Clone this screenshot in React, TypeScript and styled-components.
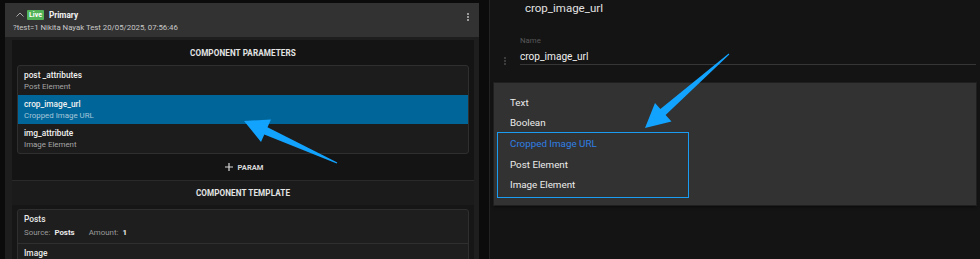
import React from "react";
import styled, { createGlobalStyle } from "styled-components";

const GlobalStyle = createGlobalStyle`
    html, body {
        margin: 0;
        padding: 0;
        background: #0b0b0b;
    }
    * {
        box-sizing: border-box;
    }
    body {
        font-family: Roboto, "Noto Sans", "Liberation Sans", sans-serif;
    }
`;

const Page = styled.div`
    position: relative;
    display: flex;
    width: 980px;
    height: 259px;
    overflow: hidden;
`;

// Left screenshot
const LeftShot = styled.div`
    width: 490px;
    height: 259px;
    padding: 3px 10px 0 5px;
    background: #0b0b0b;
    border-right: 1px solid #232323;
    display: flex;
    flex-direction: column;
    overflow: hidden;
`;

const Header = styled.div`
    flex-shrink: 0;
    height: 34px;
    background: #323232;
    display: flex;
    justify-content: space-between;
    padding: 5px 10px 0 8px;
`;

const HeaderMain = styled.div`
    display: flex;
    flex-direction: column;
`;

const HeaderRow = styled.div`
    display: flex;
    align-items: center;
    height: 13px;
`;

const Badge = styled.span`
    display: inline-flex;
    align-items: center;
    justify-content: center;
    height: 10px;
    padding: 0 2px;
    margin-right: 5px;
    background: #52b456;
    color: #fff;
    font-size: 7px;
    font-weight: 700;
    border-radius: 1px;
`;

const HeaderTitle = styled.span`
    color: #f2f2f2;
    font-size: 8.2px;
    font-weight: 700;
`;

const HeaderSub = styled.div`
    margin-top: 1px;
    color: #c8c8c8;
    font-size: 7.8px;
    line-height: 12px;
    white-space: nowrap;
`;

const Kebab = styled.div<{ $color: string; $size: number }>`
    display: flex;
    flex-direction: column;
    gap: 1px;
    padding-top: 5px;
    span {
        width: ${({ $size }) => $size}px;
        height: ${({ $size }) => $size}px;
        border-radius: 50%;
        background: ${({ $color }) => $color};
    }
`;

const Body = styled.div`
    flex: 1;
    background: #1e1e1e;
    padding: 3px 5px 0 7px;
`;

const Section = styled.div`
    background: #141414;
    display: flex;
    flex-direction: column;
`;

const SectionTitle = styled.div<{ $band?: boolean }>`
    height: ${({ $band }) => ($band ? 24 : 25)}px;
    display: flex;
    align-items: center;
    justify-content: center;
    background: ${({ $band }) => ($band ? "#1b1b1b" : "transparent")};
    color: #e4e4e4;
    font-size: 8.15px;
    font-weight: 700;
    letter-spacing: 0.1px;
`;

const ParamList = styled.div`
    margin: 0 5px;
    border: 1px solid #2f2f2f;
    border-radius: 3px;
    background: #1c1c1c;
    overflow: hidden;
`;

const ParamItem = styled.div<{ $selected?: boolean }>`
    height: 29px;
    padding: 3px 6px 0;
    background: ${({ $selected }) => ($selected ? "#006699" : "transparent")};
    display: flex;
    flex-direction: column;
`;

const ParamName = styled.span`
    color: #f0f0f0;
    font-size: 8.3px;
    font-weight: 500;
    line-height: 12px;
`;

const ParamType = styled.span<{ $selected?: boolean }>`
    color: ${({ $selected }) => ($selected ? "#a8c6da" : "#a6a6a6")};
    font-size: 7.9px;
    line-height: 11px;
`;

const AddParam = styled.div`
    height: 27px;
    display: flex;
    align-items: center;
    justify-content: center;
    gap: 5px;
    color: #d8d8d8;
    font-size: 7.6px;
    font-weight: 700;
    border-bottom: 1px solid #2a2a2a;
    padding-left: 2px;
`;

const TemplateBody = styled.div`
    flex: 1;
    background: #161616;
    padding: 4px 5px 0;
`;

const CardList = styled.div`
    border: 1px solid #2f2f2f;
    border-radius: 3px 3px 0 0;
    background: #1e1e1e;
`;

const Card = styled.div`
    padding: 3px 6px 4px;
    border-bottom: 1px solid #2f2f2f;
`;

const CardTitle = styled.div`
    color: #ececec;
    font-size: 8.4px;
    font-weight: 500;
    line-height: 12px;
`;

const CardMeta = styled.div`
    margin-top: 2px;
    display: flex;
    gap: 14px;
    font-size: 7.9px;
    line-height: 12px;
`;

const MetaPair = styled.span`
    color: #9a9a9a;
    b {
        color: #eaeaea;
        font-weight: 700;
        margin-left: 4px;
    }
`;

// Right screenshot
const RightShot = styled.div`
    flex: 1;
    height: 259px;
    background: #141414;
    padding: 0 4px;
    display: flex;
    flex-direction: column;
`;

const EditorTitle = styled.div`
    margin-top: 1px;
    padding-left: 31px;
    color: #e2e2e2;
    font-size: 11.5px;
    line-height: 14px;
`;

const Field = styled.div`
    margin-top: 21px;
    display: grid;
    grid-template-columns: 26px 1fr;
`;

const FieldLabel = styled.div`
    grid-column: 2;
    color: #585858;
    font-size: 7.8px;
    line-height: 10px;
`;

const Handle = styled.div`
    grid-column: 1;
    padding: 6px 0 0 10px;
`;

const FieldValue = styled.div`
    grid-column: 2;
    margin-top: 4px;
    color: #efefef;
    font-size: 10.1px;
    line-height: 14px;
    border-bottom: 1px solid #363636;
    height: 15px;
`;

const Menu = styled.div`
    margin-top: 18px;
    height: 122px;
    background: #323232;
    padding: 9px 0 0;
    box-shadow: 0 0 0 1px #1f1f1f, 0 2px 3px rgba(0, 0, 0, 0.5);
`;

const MenuItem = styled.div<{ $active?: boolean }>`
    height: 20.6px;
    display: flex;
    align-items: center;
    padding-left: 16px;
    color: ${({ $active }) => ($active ? "#2f7fe4" : "#ececec")};
    font-size: 9.8px;
`;

const Highlight = styled.div`
    width: 192px;
    margin: -1px 0 0 3px;
    padding-bottom: 2px;
    border: 1px solid #1a9cf2;
    ${MenuItem} {
        padding-left: 12px;
    }
`;

const Overlay = styled.svg`
    position: absolute;
    left: 0;
    top: 0;
    pointer-events: none;
`;

const ChevronUp = () => (
    <svg width="8" height="5" viewBox="0 0 8 5" style={{ margin: "0 3px 0 3px" }}>
        <path d="M0.5 4.5 L4 1 L7.5 4.5" fill="none" stroke="#a8a8a8" strokeWidth="1" />
    </svg>
);

const dots = (color: string, size: number) => (
    <Kebab $color={color} $size={size}>
        <span />
        <span />
        <span />
    </Kebab>
);

const params = [
    { name: "post _attributes", type: "Post Element" },
    { name: "crop_image_url", type: "Cropped Image URL", selected: true },
    { name: "img_attribute", type: "Image Element" },
];

const App: React.FC = () => {
    return (
        <>
            <GlobalStyle />
            <Page>
                <LeftShot>
                    <Header>
                        <HeaderMain>
                            <HeaderRow>
                                <ChevronUp />
                                <Badge>Live</Badge>
                                <HeaderTitle>Primary</HeaderTitle>
                            </HeaderRow>
                            <HeaderSub>?test=1 Nikita Nayak Test 20/05/2025, 07:56:46</HeaderSub>
                        </HeaderMain>
                        {dots("#bdbdbd", 2)}
                    </Header>
                    <Body>
                        <Section>
                            <SectionTitle>COMPONENT PARAMETERS</SectionTitle>
                            <ParamList>
                                {params.map((p) => (
                                    <ParamItem key={p.name} $selected={p.selected}>
                                        <ParamName>{p.name}</ParamName>
                                        <ParamType $selected={p.selected}>{p.type}</ParamType>
                                    </ParamItem>
                                ))}
                            </ParamList>
                            <AddParam>
                                <svg width="8" height="8" viewBox="0 0 8 8">
                                    <path d="M4 0 V8 M0 4 H8" stroke="#d8d8d8" strokeWidth="1.2" />
                                </svg>
                                PARAM
                            </AddParam>
                            <SectionTitle $band>COMPONENT TEMPLATE</SectionTitle>
                            <TemplateBody>
                                <CardList>
                                    <Card>
                                        <CardTitle>Posts</CardTitle>
                                        <CardMeta>
                                            <MetaPair>
                                                Source:<b>Posts</b>
                                            </MetaPair>
                                            <MetaPair>
                                                Amount:<b>1</b>
                                            </MetaPair>
                                        </CardMeta>
                                    </Card>
                                    <Card>
                                        <CardTitle>Image</CardTitle>
                                    </Card>
                                </CardList>
                            </TemplateBody>
                        </Section>
                    </Body>
                </LeftShot>

                <RightShot>
                    <EditorTitle>crop_image_url</EditorTitle>
                    <Field>
                        <FieldLabel>Name</FieldLabel>
                        <Handle>{dots("#4a4a4a", 2)}</Handle>
                        <FieldValue>crop_image_url</FieldValue>
                    </Field>
                    <Menu>
                        <MenuItem>Text</MenuItem>
                        <MenuItem>Boolean</MenuItem>
                        <Highlight>
                            <MenuItem $active>Cropped Image URL</MenuItem>
                            <MenuItem>Post Element</MenuItem>
                            <MenuItem>Image Element</MenuItem>
                        </Highlight>
                    </Menu>
                </RightShot>

                <Overlay width="980" height="259" viewBox="0 0 980 259">
                    <polygon
                        points="244,121 271,119.5 267.5,127.3 337.3,162.6 336.7,163.4 264.3,134.5 261,142"
                        fill="#12a3ff"
                    />
                    <polygon
                        points="645,128 655,103 660.4,109.1 728.7,53.6 729.3,54.4 665.6,115.1 671.5,121.5"
                        fill="#12a3ff"
                    />
                </Overlay>
            </Page>
        </>
    );
};

export default App;
